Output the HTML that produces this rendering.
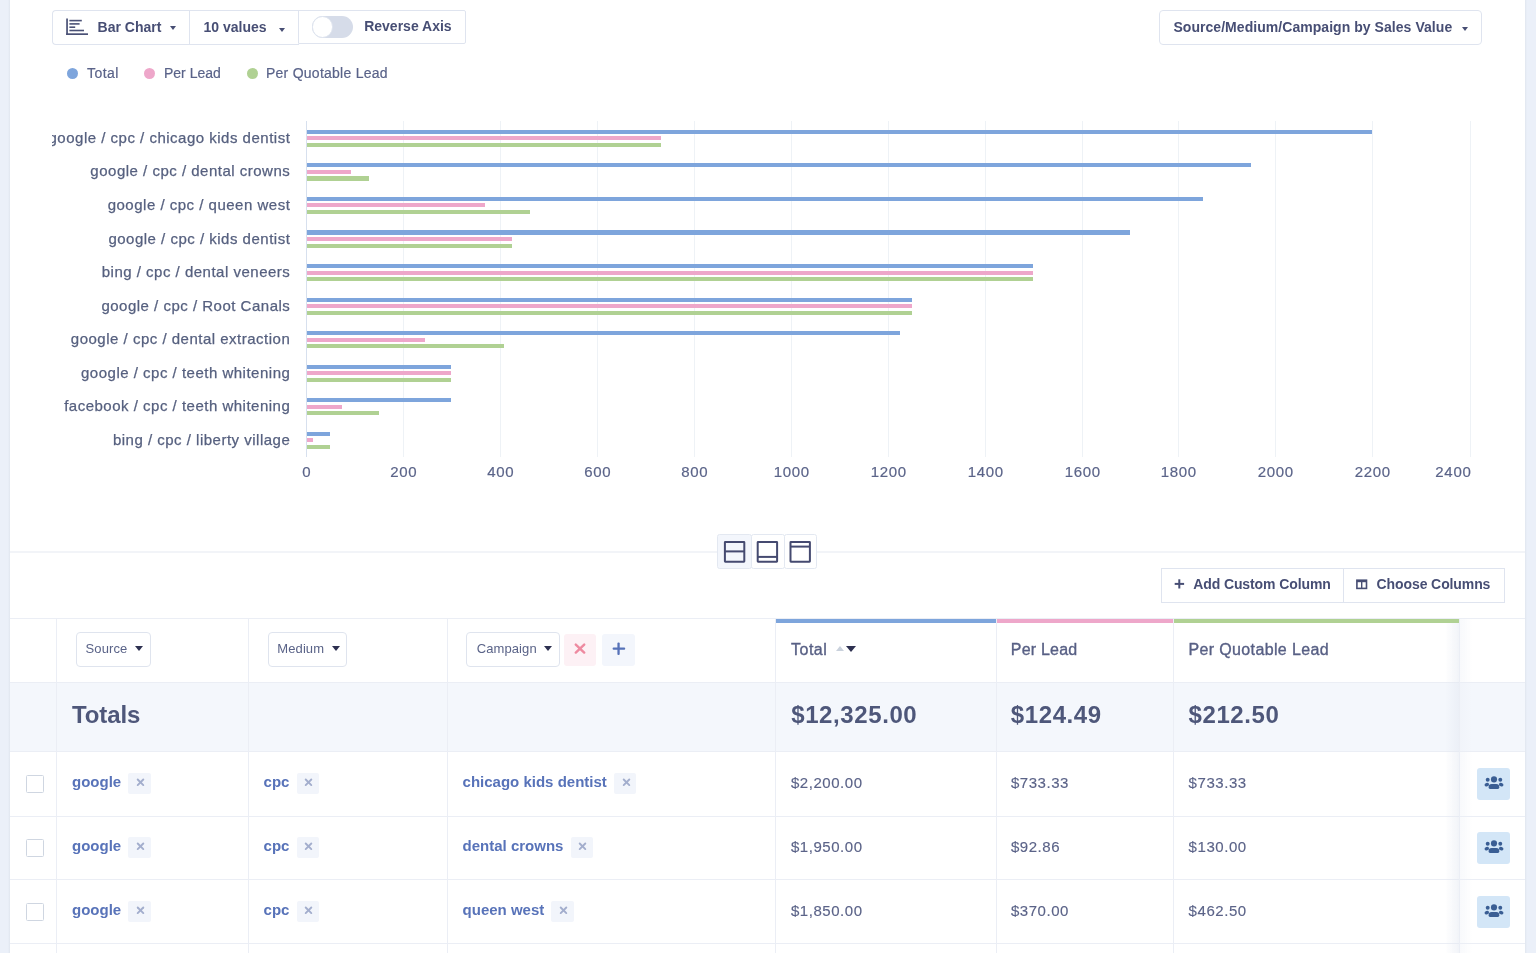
<!DOCTYPE html>
<html><head><meta charset="utf-8"><title>Report</title>
<style>
html,body{margin:0;padding:0;}
body{width:1536px;height:953px;overflow:hidden;position:relative;background:#fff;font-family:"Liberation Sans", sans-serif;}
.t{position:absolute;white-space:nowrap;}
#wrap{position:absolute;left:0;top:0;width:1536px;height:953px;will-change:transform;}
</style></head><body><div id="wrap">
<div style="position:absolute;left:0.00px;top:0.00px;width:10.00px;height:953.00px;background:#ebf0f9"></div>
<div style="position:absolute;left:8.00px;top:0.00px;width:2.00px;height:953.00px;background:linear-gradient(to right,#ebf0f9,#e0e6ef)"></div>
<div style="position:absolute;left:1525.00px;top:0.00px;width:11.00px;height:953.00px;background:#ebf0f9"></div>
<div style="position:absolute;left:1525.00px;top:0.00px;width:2.00px;height:953.00px;background:linear-gradient(to left,#ebf0f9,#e0e6ef)"></div>
<div style="position:absolute;left:52.00px;top:10.00px;width:246.50px;height:35.00px;box-sizing:border-box;border:1px solid #dfe4ef;border-width:1px 0 1px 1px;border-radius:4px 0 0 4px"></div>
<div style="position:absolute;left:189.00px;top:10.00px;width:1.00px;height:35.00px;background:#dfe4ef"></div>
<div style="position:absolute;left:297.70px;top:9.60px;width:168.00px;height:34.60px;box-sizing:border-box;border:1px solid #dfe4ef;border-left-width:1.5px;border-radius:0 2px 2px 0"></div>
<svg style="position:absolute;left:66px;top:18px" width="23" height="18" viewBox="0 0 23 18"><rect x="0.2" y="0.5" width="1.7" height="16.5" fill="#4a5176"/><rect x="0.2" y="15.3" width="21.8" height="1.7" fill="#4a5176"/><rect x="3.4" y="1.8" width="12.4" height="1.6" fill="#4a5176"/><rect x="3.4" y="5.1" width="10.2" height="1.6" fill="#4a5176"/><rect x="3.4" y="8.4" width="5.8" height="1.6" fill="#4a5176"/><rect x="3.4" y="11.7" width="14.6" height="1.6" fill="#4a5176"/></svg>
<div class="t" style="left:97.60px;top:20.25px;font-size:14px;line-height:14px;font-weight:700;color:#474e74;">Bar Chart</div>
<div style="position:absolute;left:170.00px;top:26.40px;width:0;height:0;border-left:3.25px solid transparent;border-right:3.25px solid transparent;border-top:4.00px solid #474e74"></div>
<div class="t" style="left:203.50px;top:20.25px;font-size:14px;line-height:14px;font-weight:700;color:#474e74;">10 values</div>
<div style="position:absolute;left:278.70px;top:28.10px;width:0;height:0;border-left:3.25px solid transparent;border-right:3.25px solid transparent;border-top:4.00px solid #474e74"></div>
<div style="position:absolute;left:311.60px;top:16.00px;width:41.30px;height:21.50px;background:#d6dce9;border-radius:11px"></div>
<div style="position:absolute;left:311.60px;top:16.00px;width:21.50px;height:21.50px;box-sizing:border-box;background:#fff;border:1px solid #dde3ee;border-radius:50%"></div>
<div class="t" style="left:364.20px;top:19.05px;font-size:14px;line-height:14px;font-weight:700;color:#474e74;">Reverse Axis</div>
<div style="position:absolute;left:1159.00px;top:10.00px;width:323.00px;height:34.50px;box-sizing:border-box;border:1px solid #dfe4ef;border-radius:4px"></div>
<div class="t" style="left:1173.40px;top:20.15px;font-size:14px;line-height:14px;font-weight:700;color:#474e74;letter-spacing:0.05px;">Source/Medium/Campaign by Sales Value</div>
<div style="position:absolute;left:1462.00px;top:26.50px;width:0;height:0;border-left:3.20px solid transparent;border-right:3.20px solid transparent;border-top:4.00px solid #474e74"></div>
<div style="position:absolute;left:67.20px;top:67.60px;width:11.00px;height:11.00px;background:#7ea5dc;border-radius:50%"></div>
<div class="t" style="left:87.10px;top:66.15px;font-size:14px;line-height:14px;font-weight:400;color:#5a6389;letter-spacing:0.45px;-webkit-text-stroke:0.2px #5a6389;">Total</div>
<div style="position:absolute;left:143.60px;top:67.60px;width:11.00px;height:11.00px;background:#eea7ca;border-radius:50%"></div>
<div class="t" style="left:164.00px;top:66.15px;font-size:14px;line-height:14px;font-weight:400;color:#5a6389;-webkit-text-stroke:0.2px #5a6389;">Per Lead</div>
<div style="position:absolute;left:247.00px;top:67.60px;width:11.00px;height:11.00px;background:#b0d193;border-radius:50%"></div>
<div class="t" style="left:266.00px;top:66.15px;font-size:14px;line-height:14px;font-weight:400;color:#5a6389;letter-spacing:0.25px;-webkit-text-stroke:0.2px #5a6389;">Per Quotable Lead</div>
<div style="position:absolute;left:403.00px;top:121.00px;width:1.00px;height:335.50px;background:#eef2f6"></div>
<div style="position:absolute;left:500.00px;top:121.00px;width:1.00px;height:335.50px;background:#eef2f6"></div>
<div style="position:absolute;left:597.00px;top:121.00px;width:1.00px;height:335.50px;background:#eef2f6"></div>
<div style="position:absolute;left:694.00px;top:121.00px;width:1.00px;height:335.50px;background:#eef2f6"></div>
<div style="position:absolute;left:791.00px;top:121.00px;width:1.00px;height:335.50px;background:#eef2f6"></div>
<div style="position:absolute;left:888.00px;top:121.00px;width:1.00px;height:335.50px;background:#eef2f6"></div>
<div style="position:absolute;left:985.00px;top:121.00px;width:1.00px;height:335.50px;background:#eef2f6"></div>
<div style="position:absolute;left:1082.00px;top:121.00px;width:1.00px;height:335.50px;background:#eef2f6"></div>
<div style="position:absolute;left:1178.00px;top:121.00px;width:1.00px;height:335.50px;background:#eef2f6"></div>
<div style="position:absolute;left:1275.00px;top:121.00px;width:1.00px;height:335.50px;background:#eef2f6"></div>
<div style="position:absolute;left:1372.00px;top:121.00px;width:1.00px;height:335.50px;background:#eef2f6"></div>
<div style="position:absolute;left:1470.00px;top:121.00px;width:1.00px;height:335.50px;background:#eef2f6"></div>
<div style="position:absolute;left:306.00px;top:121.00px;width:1.00px;height:335.50px;background:#d7e0ee"></div>
<div class="t" style="left:106.75px;width:400px;text-align:center;top:464.20px;font-size:15px;line-height:15px;font-weight:400;color:#5b6489;letter-spacing:0.7px;-webkit-text-stroke:0.2px #5b6489;">0</div>
<div class="t" style="left:203.75px;width:400px;text-align:center;top:464.20px;font-size:15px;line-height:15px;font-weight:400;color:#5b6489;letter-spacing:0.7px;-webkit-text-stroke:0.2px #5b6489;">200</div>
<div class="t" style="left:300.75px;width:400px;text-align:center;top:464.20px;font-size:15px;line-height:15px;font-weight:400;color:#5b6489;letter-spacing:0.7px;-webkit-text-stroke:0.2px #5b6489;">400</div>
<div class="t" style="left:397.75px;width:400px;text-align:center;top:464.20px;font-size:15px;line-height:15px;font-weight:400;color:#5b6489;letter-spacing:0.7px;-webkit-text-stroke:0.2px #5b6489;">600</div>
<div class="t" style="left:494.75px;width:400px;text-align:center;top:464.20px;font-size:15px;line-height:15px;font-weight:400;color:#5b6489;letter-spacing:0.7px;-webkit-text-stroke:0.2px #5b6489;">800</div>
<div class="t" style="left:591.75px;width:400px;text-align:center;top:464.20px;font-size:15px;line-height:15px;font-weight:400;color:#5b6489;letter-spacing:0.7px;-webkit-text-stroke:0.2px #5b6489;">1000</div>
<div class="t" style="left:688.75px;width:400px;text-align:center;top:464.20px;font-size:15px;line-height:15px;font-weight:400;color:#5b6489;letter-spacing:0.7px;-webkit-text-stroke:0.2px #5b6489;">1200</div>
<div class="t" style="left:785.75px;width:400px;text-align:center;top:464.20px;font-size:15px;line-height:15px;font-weight:400;color:#5b6489;letter-spacing:0.7px;-webkit-text-stroke:0.2px #5b6489;">1400</div>
<div class="t" style="left:882.75px;width:400px;text-align:center;top:464.20px;font-size:15px;line-height:15px;font-weight:400;color:#5b6489;letter-spacing:0.7px;-webkit-text-stroke:0.2px #5b6489;">1600</div>
<div class="t" style="left:978.75px;width:400px;text-align:center;top:464.20px;font-size:15px;line-height:15px;font-weight:400;color:#5b6489;letter-spacing:0.7px;-webkit-text-stroke:0.2px #5b6489;">1800</div>
<div class="t" style="left:1075.75px;width:400px;text-align:center;top:464.20px;font-size:15px;line-height:15px;font-weight:400;color:#5b6489;letter-spacing:0.7px;-webkit-text-stroke:0.2px #5b6489;">2000</div>
<div class="t" style="left:1172.75px;width:400px;text-align:center;top:464.20px;font-size:15px;line-height:15px;font-weight:400;color:#5b6489;letter-spacing:0.7px;-webkit-text-stroke:0.2px #5b6489;">2200</div>
<div class="t" style="right:64.50px;top:464.20px;font-size:15px;line-height:15px;font-weight:400;color:#5b6489;letter-spacing:0.7px;-webkit-text-stroke:0.2px #5b6489;">2400</div>
<div style="position:absolute;left:52px;top:100px;width:250px;height:360px;overflow:hidden">
<div class="t" style="right:11.70px;top:29.90px;font-size:15px;line-height:15px;color:#56607f;letter-spacing:0.5px;white-space:nowrap;-webkit-text-stroke:0.25px #56607f">google / cpc / chicago kids dentist</div>
<div class="t" style="right:11.70px;top:63.45px;font-size:15px;line-height:15px;color:#56607f;letter-spacing:0.5px;white-space:nowrap;-webkit-text-stroke:0.25px #56607f">google / cpc / dental crowns</div>
<div class="t" style="right:11.70px;top:97.00px;font-size:15px;line-height:15px;color:#56607f;letter-spacing:0.5px;white-space:nowrap;-webkit-text-stroke:0.25px #56607f">google / cpc / queen west</div>
<div class="t" style="right:11.70px;top:130.55px;font-size:15px;line-height:15px;color:#56607f;letter-spacing:0.5px;white-space:nowrap;-webkit-text-stroke:0.25px #56607f">google / cpc / kids dentist</div>
<div class="t" style="right:11.70px;top:164.10px;font-size:15px;line-height:15px;color:#56607f;letter-spacing:0.5px;white-space:nowrap;-webkit-text-stroke:0.25px #56607f">bing / cpc / dental veneers</div>
<div class="t" style="right:11.70px;top:197.65px;font-size:15px;line-height:15px;color:#56607f;letter-spacing:0.5px;white-space:nowrap;-webkit-text-stroke:0.25px #56607f">google / cpc / Root Canals</div>
<div class="t" style="right:11.70px;top:231.20px;font-size:15px;line-height:15px;color:#56607f;letter-spacing:0.5px;white-space:nowrap;-webkit-text-stroke:0.25px #56607f">google / cpc / dental extraction</div>
<div class="t" style="right:11.70px;top:264.75px;font-size:15px;line-height:15px;color:#56607f;letter-spacing:0.5px;white-space:nowrap;-webkit-text-stroke:0.25px #56607f">google / cpc / teeth whitening</div>
<div class="t" style="right:11.70px;top:298.30px;font-size:15px;line-height:15px;color:#56607f;letter-spacing:0.5px;white-space:nowrap;-webkit-text-stroke:0.25px #56607f">facebook / cpc / teeth whitening</div>
<div class="t" style="right:11.70px;top:331.85px;font-size:15px;line-height:15px;color:#56607f;letter-spacing:0.5px;white-space:nowrap;-webkit-text-stroke:0.25px #56607f">bing / cpc / liberty village</div>
</div>
<div style="position:absolute;left:307.00px;top:129.80px;width:1065.34px;height:4.10px;background:#7ea5dc"></div>
<div style="position:absolute;left:307.00px;top:136.30px;width:354.45px;height:4.10px;background:#eea7ca"></div>
<div style="position:absolute;left:307.00px;top:142.90px;width:354.45px;height:4.10px;background:#b0d193"></div>
<div style="position:absolute;left:307.00px;top:163.35px;width:944.17px;height:4.10px;background:#7ea5dc"></div>
<div style="position:absolute;left:307.00px;top:169.85px;width:44.01px;height:4.10px;background:#eea7ca"></div>
<div style="position:absolute;left:307.00px;top:176.45px;width:62.01px;height:4.10px;background:#b0d193"></div>
<div style="position:absolute;left:307.00px;top:196.90px;width:895.70px;height:4.10px;background:#7ea5dc"></div>
<div style="position:absolute;left:307.00px;top:203.40px;width:178.34px;height:4.10px;background:#eea7ca"></div>
<div style="position:absolute;left:307.00px;top:210.00px;width:223.17px;height:4.10px;background:#b0d193"></div>
<div style="position:absolute;left:307.00px;top:230.45px;width:822.99px;height:4.10px;background:#7ea5dc"></div>
<div style="position:absolute;left:307.00px;top:236.95px;width:205.00px;height:4.10px;background:#eea7ca"></div>
<div style="position:absolute;left:307.00px;top:243.55px;width:205.00px;height:4.10px;background:#b0d193"></div>
<div style="position:absolute;left:307.00px;top:264.00px;width:726.05px;height:4.10px;background:#7ea5dc"></div>
<div style="position:absolute;left:307.00px;top:270.50px;width:726.05px;height:4.10px;background:#eea7ca"></div>
<div style="position:absolute;left:307.00px;top:277.10px;width:726.05px;height:4.10px;background:#b0d193"></div>
<div style="position:absolute;left:307.00px;top:297.55px;width:604.88px;height:4.10px;background:#7ea5dc"></div>
<div style="position:absolute;left:307.00px;top:304.05px;width:604.88px;height:4.10px;background:#eea7ca"></div>
<div style="position:absolute;left:307.00px;top:310.65px;width:604.88px;height:4.10px;background:#b0d193"></div>
<div style="position:absolute;left:307.00px;top:331.10px;width:592.76px;height:4.10px;background:#7ea5dc"></div>
<div style="position:absolute;left:307.00px;top:337.60px;width:117.75px;height:4.10px;background:#eea7ca"></div>
<div style="position:absolute;left:307.00px;top:344.20px;width:196.92px;height:4.10px;background:#b0d193"></div>
<div style="position:absolute;left:307.00px;top:364.65px;width:144.41px;height:4.10px;background:#7ea5dc"></div>
<div style="position:absolute;left:307.00px;top:371.15px;width:144.41px;height:4.10px;background:#eea7ca"></div>
<div style="position:absolute;left:307.00px;top:377.75px;width:144.41px;height:4.10px;background:#b0d193"></div>
<div style="position:absolute;left:307.00px;top:398.20px;width:144.41px;height:4.10px;background:#7ea5dc"></div>
<div style="position:absolute;left:307.00px;top:404.70px;width:35.35px;height:4.10px;background:#eea7ca"></div>
<div style="position:absolute;left:307.00px;top:411.30px;width:71.70px;height:4.10px;background:#b0d193"></div>
<div style="position:absolute;left:307.00px;top:431.75px;width:23.23px;height:4.10px;background:#7ea5dc"></div>
<div style="position:absolute;left:307.00px;top:438.25px;width:6.27px;height:4.10px;background:#eea7ca"></div>
<div style="position:absolute;left:307.00px;top:444.85px;width:23.23px;height:4.10px;background:#b0d193"></div>
<div style="position:absolute;left:10.00px;top:551.00px;width:1515.00px;height:2.00px;background:#f2f4f8"></div>
<div style="position:absolute;left:717.00px;top:534.20px;width:34.50px;height:34.40px;box-sizing:border-box;border:1px solid #e3e8f1;border-radius:2.5px;background:#f3f6fc"></div>
<div style="position:absolute;left:750.50px;top:534.20px;width:34.00px;height:34.40px;box-sizing:border-box;border:1px solid #e3e8f1;border-radius:2.5px;background:#fff"></div>
<div style="position:absolute;left:783.50px;top:534.20px;width:33.50px;height:34.40px;box-sizing:border-box;border:1px solid #e3e8f1;border-radius:2.5px;background:#fff"></div>
<svg style="position:absolute;left:723px;top:540px" width="24" height="24" viewBox="0 0 24 24" fill="none" stroke="#454a70" stroke-width="2"><rect x="1.9" y="1.9" width="19.4" height="19.8" rx="0.4"/><line x1="1.9" y1="11.4" x2="21.3" y2="11.4"/></svg>
<svg style="position:absolute;left:755.5px;top:540px" width="24" height="24" viewBox="0 0 24 24" fill="none" stroke="#454a70" stroke-width="2"><rect x="1.7" y="1.9" width="19.4" height="19.8" rx="0.4"/><line x1="1.7" y1="16.9" x2="21.1" y2="16.9"/></svg>
<svg style="position:absolute;left:788.5px;top:540px" width="24" height="24" viewBox="0 0 24 24" fill="none" stroke="#454a70" stroke-width="2"><rect x="1.5" y="1.9" width="19.4" height="19.8" rx="0.4"/><line x1="1.5" y1="6.6" x2="20.9" y2="6.6"/></svg>
<div style="position:absolute;left:1160.50px;top:568.30px;width:344.00px;height:34.70px;box-sizing:border-box;border:1px solid #dfe4ef"></div>
<div style="position:absolute;left:1342.80px;top:568.30px;width:1.00px;height:34.70px;background:#dfe4ef"></div>
<svg style="position:absolute;left:1174px;top:579px" width="11" height="10" viewBox="0 0 11 10"><rect x="4.3" y="0.3" width="2" height="9.2" fill="#474e74"/><rect x="0.7" y="3.9" width="9.4" height="2" fill="#474e74"/></svg>
<div class="t" style="left:1193.20px;top:577.05px;font-size:14px;line-height:14px;font-weight:700;color:#474e74;letter-spacing:-0.1px;">Add Custom Column</div>
<svg style="position:absolute;left:1356px;top:578.5px" width="12" height="11" viewBox="0 0 12 11" fill="none" stroke="#474e74"><rect x="0.9" y="1.2" width="9.6" height="8.2" stroke-width="1.6"/><line x1="0.9" y1="2.2" x2="10.5" y2="2.2" stroke-width="2"/><line x1="5.7" y1="1.2" x2="5.7" y2="9.4" stroke-width="1.4"/></svg>
<div class="t" style="left:1376.60px;top:577.05px;font-size:14px;line-height:14px;font-weight:700;color:#474e74;letter-spacing:-0.1px;">Choose Columns</div>
<div style="position:absolute;left:10.00px;top:618.00px;width:1515.00px;height:1.00px;background:#ebeef5"></div>
<div style="position:absolute;left:10.00px;top:683.00px;width:1515.00px;height:68.00px;background:#f4f7fc"></div>
<div style="position:absolute;left:10.00px;top:682.00px;width:1515.00px;height:1.00px;background:#ebeef5"></div>
<div style="position:absolute;left:10.00px;top:751.00px;width:1515.00px;height:1.00px;background:#ebeef5"></div>
<div style="position:absolute;left:10.00px;top:816.00px;width:1515.00px;height:1.00px;background:#ebeef5"></div>
<div style="position:absolute;left:10.00px;top:879.00px;width:1515.00px;height:1.00px;background:#ebeef5"></div>
<div style="position:absolute;left:10.00px;top:943.00px;width:1515.00px;height:1.00px;background:#ebeef5"></div>
<div style="position:absolute;left:56.00px;top:619.00px;width:1.00px;height:334.00px;background:#ebeef5"></div>
<div style="position:absolute;left:248.00px;top:619.00px;width:1.00px;height:334.00px;background:#ebeef5"></div>
<div style="position:absolute;left:447.00px;top:619.00px;width:1.00px;height:334.00px;background:#ebeef5"></div>
<div style="position:absolute;left:775.00px;top:619.00px;width:1.00px;height:334.00px;background:#ebeef5"></div>
<div style="position:absolute;left:996.00px;top:619.00px;width:1.00px;height:334.00px;background:#ebeef5"></div>
<div style="position:absolute;left:1173.00px;top:619.00px;width:1.00px;height:334.00px;background:#ebeef5"></div>
<div style="position:absolute;left:1459.00px;top:619.00px;width:1.00px;height:334.00px;background:#ebeef5"></div>
<div style="position:absolute;left:776.00px;top:619.00px;width:220.00px;height:4.00px;background:#7ea5dc"></div>
<div style="position:absolute;left:997.00px;top:619.00px;width:176.00px;height:4.00px;background:#eea7ca"></div>
<div style="position:absolute;left:1174.00px;top:619.00px;width:285.00px;height:4.00px;background:#b0d193"></div>
<div style="position:absolute;left:1445.00px;top:623.00px;width:14.00px;height:330.00px;background:linear-gradient(to right, rgba(225,230,240,0), rgba(225,230,240,0.45))"></div>
<div style="position:absolute;left:1460.00px;top:619.00px;width:12.00px;height:334.00px;background:linear-gradient(to left, rgba(235,238,245,0), rgba(235,238,245,0.35))"></div>
<div style="position:absolute;left:76.30px;top:632.30px;width:74.50px;height:34.40px;box-sizing:border-box;border:1px solid #dfe4ee;border-radius:4px;background:#fff"></div>
<div class="t" style="left:85.60px;top:642.20px;font-size:13px;line-height:13px;font-weight:400;color:#5a6388;letter-spacing:0.1px;">Source</div>
<div style="position:absolute;left:134.90px;top:646.00px;width:0;height:0;border-left:4.20px solid transparent;border-right:4.20px solid transparent;border-top:5.40px solid #2d3050"></div>
<div style="position:absolute;left:268.20px;top:632.30px;width:78.80px;height:34.40px;box-sizing:border-box;border:1px solid #dfe4ee;border-radius:4px;background:#fff"></div>
<div class="t" style="left:277.30px;top:642.20px;font-size:13px;line-height:13px;font-weight:400;color:#5a6388;letter-spacing:0.1px;">Medium</div>
<div style="position:absolute;left:331.80px;top:646.00px;width:0;height:0;border-left:4.20px solid transparent;border-right:4.20px solid transparent;border-top:5.40px solid #2d3050"></div>
<div style="position:absolute;left:466.30px;top:632.30px;width:93.50px;height:34.40px;box-sizing:border-box;border:1px solid #dfe4ee;border-radius:4px;background:#fff"></div>
<div class="t" style="left:476.70px;top:642.20px;font-size:13px;line-height:13px;font-weight:400;color:#5a6388;letter-spacing:0.1px;">Campaign</div>
<div style="position:absolute;left:543.80px;top:646.00px;width:0;height:0;border-left:4.20px solid transparent;border-right:4.20px solid transparent;border-top:5.40px solid #2d3050"></div>
<div style="position:absolute;left:564.00px;top:634.00px;width:32.00px;height:32.00px;background:#fdf1f5;border-radius:3px"></div>
<svg style="position:absolute;left:574px;top:643px" width="12" height="12" viewBox="0 0 12 12" stroke="#ee8aa0" stroke-width="2.4" stroke-linecap="round"><line x1="1.8" y1="1.6" x2="10.2" y2="9.6"/><line x1="10.2" y1="1.6" x2="1.8" y2="9.6"/></svg>
<div style="position:absolute;left:602.30px;top:634.00px;width:32.30px;height:32.00px;background:#f3f6fc;border-radius:3px"></div>
<svg style="position:absolute;left:611.5px;top:642px" width="14" height="14" viewBox="0 0 14 14" fill="#5672b8"><rect x="5.4" y="0.4" width="2.3" height="12.5" rx="1"/><rect x="0.6" y="5.4" width="12.6" height="2.3" rx="1"/></svg>
<div class="t" style="left:791.00px;top:641.86px;font-size:16px;line-height:16px;font-weight:400;color:#575f84;letter-spacing:0.5px;-webkit-text-stroke:0.35px #575f84;">Total</div>
<div style="position:absolute;left:835.6px;top:646.2px;width:0;height:0;border-left:4.8px solid transparent;border-right:4.8px solid transparent;border-bottom:5.6px solid #c9d1dc"></div>
<div style="position:absolute;left:846.30px;top:646.20px;width:0;height:0;border-left:5.20px solid transparent;border-right:5.20px solid transparent;border-top:6.00px solid #2d3050"></div>
<div class="t" style="left:1010.80px;top:641.86px;font-size:16px;line-height:16px;font-weight:400;color:#575f84;letter-spacing:0.2px;-webkit-text-stroke:0.35px #575f84;">Per Lead</div>
<div class="t" style="left:1188.50px;top:641.86px;font-size:16px;line-height:16px;font-weight:400;color:#575f84;letter-spacing:0.36px;-webkit-text-stroke:0.35px #575f84;">Per Quotable Lead</div>
<div class="t" style="left:72.00px;top:703.48px;font-size:24px;line-height:24px;font-weight:700;color:#4e577a;letter-spacing:-0.1px;">Totals</div>
<div class="t" style="left:791.20px;top:703.48px;font-size:24px;line-height:24px;font-weight:700;color:#4e577a;letter-spacing:0.6px;">$12,325.00</div>
<div class="t" style="left:1010.80px;top:703.48px;font-size:24px;line-height:24px;font-weight:700;color:#4e577a;letter-spacing:0.6px;">$124.49</div>
<div class="t" style="left:1188.50px;top:703.48px;font-size:24px;line-height:24px;font-weight:700;color:#4e577a;letter-spacing:0.6px;">$212.50</div>
<div style="position:absolute;left:25.80px;top:775.00px;width:17.80px;height:17.80px;box-sizing:border-box;border:1.8px solid #cfd6e1;border-radius:1.5px;background:#fff"></div>
<div class="t" style="left:72.00px;top:773.70px;font-size:15px;line-height:15px;font-weight:700;color:#5873b9;">google</div>
<div style="position:absolute;left:128.37px;top:773.20px;width:22.20px;height:21.20px;background:#f2f5fb;border-radius:2px"></div>
<svg style="position:absolute;left:135.97px;top:778.20px" width="9" height="9" viewBox="0 0 9 9" stroke="#a3aecd" stroke-width="1.9" stroke-linecap="round"><line x1="1.7" y1="1.5" x2="7.3" y2="7.1"/><line x1="7.3" y1="1.5" x2="1.7" y2="7.1"/></svg>
<div class="t" style="left:263.60px;top:773.70px;font-size:15px;line-height:15px;font-weight:700;color:#5873b9;">cpc</div>
<div style="position:absolute;left:296.66px;top:773.20px;width:22.20px;height:21.20px;background:#f2f5fb;border-radius:2px"></div>
<svg style="position:absolute;left:304.26px;top:778.20px" width="9" height="9" viewBox="0 0 9 9" stroke="#a3aecd" stroke-width="1.9" stroke-linecap="round"><line x1="1.7" y1="1.5" x2="7.3" y2="7.1"/><line x1="7.3" y1="1.5" x2="1.7" y2="7.1"/></svg>
<div class="t" style="left:462.60px;top:773.70px;font-size:15px;line-height:15px;font-weight:700;color:#5873b9;">chicago kids dentist</div>
<div style="position:absolute;left:614.00px;top:773.20px;width:22.20px;height:21.20px;background:#f2f5fb;border-radius:2px"></div>
<svg style="position:absolute;left:621.60px;top:778.20px" width="9" height="9" viewBox="0 0 9 9" stroke="#a3aecd" stroke-width="1.9" stroke-linecap="round"><line x1="1.7" y1="1.5" x2="7.3" y2="7.1"/><line x1="7.3" y1="1.5" x2="1.7" y2="7.1"/></svg>
<div class="t" style="left:790.90px;top:774.90px;font-size:15px;line-height:15px;font-weight:400;color:#5b6388;letter-spacing:0.55px;-webkit-text-stroke:0.15px #5b6388;">$2,200.00</div>
<div class="t" style="left:1010.90px;top:774.90px;font-size:15px;line-height:15px;font-weight:400;color:#5b6388;letter-spacing:0.55px;-webkit-text-stroke:0.15px #5b6388;">$733.33</div>
<div class="t" style="left:1188.60px;top:774.90px;font-size:15px;line-height:15px;font-weight:400;color:#5b6388;letter-spacing:0.55px;-webkit-text-stroke:0.15px #5b6388;">$733.33</div>
<div style="position:absolute;left:1477.30px;top:767.50px;width:32.60px;height:32.70px;background:#d3e6f7;border-radius:3px"></div>
<svg style="position:absolute;left:1484px;top:776.00px" width="20" height="14" viewBox="0 0 20 14" fill="#3a5e94"><circle cx="10" cy="3.4" r="3.05"/><path d="M4.6 11.2 Q4.6 8 7.6 8 H12.3 Q15.3 8 15.3 11.2 V11.6 Q15.3 13 13.9 13 H6 Q4.6 13 4.6 11.6Z"/><circle cx="3.7" cy="3.8" r="1.95"/><circle cx="16.3" cy="3.8" r="1.95"/><ellipse cx="2.8" cy="8.7" rx="2.3" ry="1.75" transform="rotate(-20 2.8 8.7)"/><ellipse cx="17.2" cy="8.7" rx="2.3" ry="1.75" transform="rotate(20 17.2 8.7)"/></svg>
<div style="position:absolute;left:25.80px;top:839.00px;width:17.80px;height:17.80px;box-sizing:border-box;border:1.8px solid #cfd6e1;border-radius:1.5px;background:#fff"></div>
<div class="t" style="left:72.00px;top:837.70px;font-size:15px;line-height:15px;font-weight:700;color:#5873b9;">google</div>
<div style="position:absolute;left:128.37px;top:837.20px;width:22.20px;height:21.20px;background:#f2f5fb;border-radius:2px"></div>
<svg style="position:absolute;left:135.97px;top:842.20px" width="9" height="9" viewBox="0 0 9 9" stroke="#a3aecd" stroke-width="1.9" stroke-linecap="round"><line x1="1.7" y1="1.5" x2="7.3" y2="7.1"/><line x1="7.3" y1="1.5" x2="1.7" y2="7.1"/></svg>
<div class="t" style="left:263.60px;top:837.70px;font-size:15px;line-height:15px;font-weight:700;color:#5873b9;">cpc</div>
<div style="position:absolute;left:296.66px;top:837.20px;width:22.20px;height:21.20px;background:#f2f5fb;border-radius:2px"></div>
<svg style="position:absolute;left:304.26px;top:842.20px" width="9" height="9" viewBox="0 0 9 9" stroke="#a3aecd" stroke-width="1.9" stroke-linecap="round"><line x1="1.7" y1="1.5" x2="7.3" y2="7.1"/><line x1="7.3" y1="1.5" x2="1.7" y2="7.1"/></svg>
<div class="t" style="left:462.60px;top:837.70px;font-size:15px;line-height:15px;font-weight:700;color:#5873b9;">dental crowns</div>
<div style="position:absolute;left:570.66px;top:837.20px;width:22.20px;height:21.20px;background:#f2f5fb;border-radius:2px"></div>
<svg style="position:absolute;left:578.26px;top:842.20px" width="9" height="9" viewBox="0 0 9 9" stroke="#a3aecd" stroke-width="1.9" stroke-linecap="round"><line x1="1.7" y1="1.5" x2="7.3" y2="7.1"/><line x1="7.3" y1="1.5" x2="1.7" y2="7.1"/></svg>
<div class="t" style="left:790.90px;top:838.90px;font-size:15px;line-height:15px;font-weight:400;color:#5b6388;letter-spacing:0.55px;-webkit-text-stroke:0.15px #5b6388;">$1,950.00</div>
<div class="t" style="left:1010.90px;top:838.90px;font-size:15px;line-height:15px;font-weight:400;color:#5b6388;letter-spacing:0.55px;-webkit-text-stroke:0.15px #5b6388;">$92.86</div>
<div class="t" style="left:1188.60px;top:838.90px;font-size:15px;line-height:15px;font-weight:400;color:#5b6388;letter-spacing:0.55px;-webkit-text-stroke:0.15px #5b6388;">$130.00</div>
<div style="position:absolute;left:1477.30px;top:831.50px;width:32.60px;height:32.70px;background:#d3e6f7;border-radius:3px"></div>
<svg style="position:absolute;left:1484px;top:840.00px" width="20" height="14" viewBox="0 0 20 14" fill="#3a5e94"><circle cx="10" cy="3.4" r="3.05"/><path d="M4.6 11.2 Q4.6 8 7.6 8 H12.3 Q15.3 8 15.3 11.2 V11.6 Q15.3 13 13.9 13 H6 Q4.6 13 4.6 11.6Z"/><circle cx="3.7" cy="3.8" r="1.95"/><circle cx="16.3" cy="3.8" r="1.95"/><ellipse cx="2.8" cy="8.7" rx="2.3" ry="1.75" transform="rotate(-20 2.8 8.7)"/><ellipse cx="17.2" cy="8.7" rx="2.3" ry="1.75" transform="rotate(20 17.2 8.7)"/></svg>
<div style="position:absolute;left:25.80px;top:903.00px;width:17.80px;height:17.80px;box-sizing:border-box;border:1.8px solid #cfd6e1;border-radius:1.5px;background:#fff"></div>
<div class="t" style="left:72.00px;top:901.70px;font-size:15px;line-height:15px;font-weight:700;color:#5873b9;">google</div>
<div style="position:absolute;left:128.37px;top:901.20px;width:22.20px;height:21.20px;background:#f2f5fb;border-radius:2px"></div>
<svg style="position:absolute;left:135.97px;top:906.20px" width="9" height="9" viewBox="0 0 9 9" stroke="#a3aecd" stroke-width="1.9" stroke-linecap="round"><line x1="1.7" y1="1.5" x2="7.3" y2="7.1"/><line x1="7.3" y1="1.5" x2="1.7" y2="7.1"/></svg>
<div class="t" style="left:263.60px;top:901.70px;font-size:15px;line-height:15px;font-weight:700;color:#5873b9;">cpc</div>
<div style="position:absolute;left:296.66px;top:901.20px;width:22.20px;height:21.20px;background:#f2f5fb;border-radius:2px"></div>
<svg style="position:absolute;left:304.26px;top:906.20px" width="9" height="9" viewBox="0 0 9 9" stroke="#a3aecd" stroke-width="1.9" stroke-linecap="round"><line x1="1.7" y1="1.5" x2="7.3" y2="7.1"/><line x1="7.3" y1="1.5" x2="1.7" y2="7.1"/></svg>
<div class="t" style="left:462.60px;top:901.70px;font-size:15px;line-height:15px;font-weight:700;color:#5873b9;">queen west</div>
<div style="position:absolute;left:551.49px;top:901.20px;width:22.20px;height:21.20px;background:#f2f5fb;border-radius:2px"></div>
<svg style="position:absolute;left:559.09px;top:906.20px" width="9" height="9" viewBox="0 0 9 9" stroke="#a3aecd" stroke-width="1.9" stroke-linecap="round"><line x1="1.7" y1="1.5" x2="7.3" y2="7.1"/><line x1="7.3" y1="1.5" x2="1.7" y2="7.1"/></svg>
<div class="t" style="left:790.90px;top:902.90px;font-size:15px;line-height:15px;font-weight:400;color:#5b6388;letter-spacing:0.55px;-webkit-text-stroke:0.15px #5b6388;">$1,850.00</div>
<div class="t" style="left:1010.90px;top:902.90px;font-size:15px;line-height:15px;font-weight:400;color:#5b6388;letter-spacing:0.55px;-webkit-text-stroke:0.15px #5b6388;">$370.00</div>
<div class="t" style="left:1188.60px;top:902.90px;font-size:15px;line-height:15px;font-weight:400;color:#5b6388;letter-spacing:0.55px;-webkit-text-stroke:0.15px #5b6388;">$462.50</div>
<div style="position:absolute;left:1477.30px;top:895.50px;width:32.60px;height:32.70px;background:#d3e6f7;border-radius:3px"></div>
<svg style="position:absolute;left:1484px;top:904.00px" width="20" height="14" viewBox="0 0 20 14" fill="#3a5e94"><circle cx="10" cy="3.4" r="3.05"/><path d="M4.6 11.2 Q4.6 8 7.6 8 H12.3 Q15.3 8 15.3 11.2 V11.6 Q15.3 13 13.9 13 H6 Q4.6 13 4.6 11.6Z"/><circle cx="3.7" cy="3.8" r="1.95"/><circle cx="16.3" cy="3.8" r="1.95"/><ellipse cx="2.8" cy="8.7" rx="2.3" ry="1.75" transform="rotate(-20 2.8 8.7)"/><ellipse cx="17.2" cy="8.7" rx="2.3" ry="1.75" transform="rotate(20 17.2 8.7)"/></svg>
</div></body></html>
